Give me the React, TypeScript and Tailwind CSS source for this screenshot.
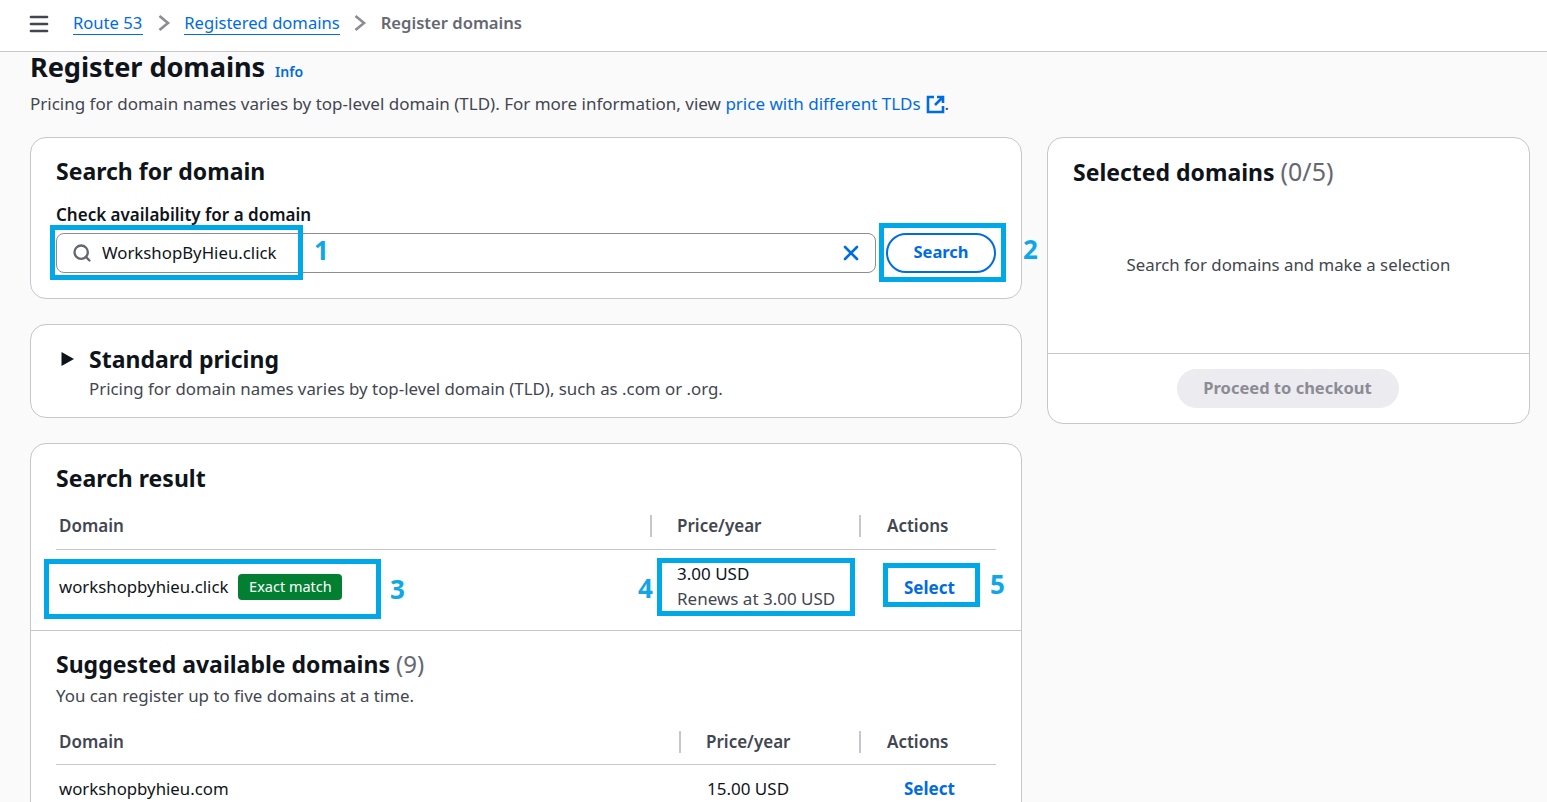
import { Menu, Search, X } from 'lucide-react';

const font = "font-['Noto_Sans',sans-serif]";

const Callout = ({ className, num, numClass }: { className: string; num: string; numClass: string }) => (
  <>
    <div className={`absolute border-[5px] border-[#00a8e8] ${className}`} />
    <span className={`absolute text-[26px] leading-[30px] font-bold text-[#0fa7e6] ${numClass}`}>{num}</span>
  </>
);

const HeaderCell = ({ className, children }: { className: string; children: string }) => (
  <div className={`flex h-[22px] items-center text-[17px] font-semibold text-[#424650] ${className}`}>{children}</div>
);

const Crumb = () => (
  <svg className="mx-[10.5px] h-[16px] w-[20px]" viewBox="0 0 20 16" fill="none">
    <path d="M5.5 1 L14 8 L5.5 15" stroke="#8c8c94" strokeWidth="2.6" />
  </svg>
);

const App = () => {
  return (
    <div className={`relative h-[802px] w-[1547px] overflow-hidden bg-[#fafafa] ${font} text-[#0f141a]`}>
      <header className="flex h-[52px] items-center border-b border-[#c6c6cd] bg-white pb-[4px] pl-[27px]">
        <Menu className="h-[24px] w-[24px] text-[#424650]" strokeWidth={2.7} />
        <nav className="ml-[22px] flex items-center text-[16.6px]">
          <a className="border-b border-[#006ce0] pr-[1px] leading-[22px] text-[#006ce0]">Route 53</a>
          <Crumb />
          <a className="border-b border-[#006ce0] leading-[22px] text-[#006ce0]">Registered domains</a>
          <Crumb />
          <span className="font-semibold text-[#656871]">Register domains</span>
        </nav>
      </header>

      <main className="pl-[30px] pr-[17px]">
        <div className="flex h-[30px] items-end">
          <h1 className="text-[27.2px] leading-[30px] font-bold tracking-[-0.1px]">Register domains</h1>
          <a className="mb-[1px] ml-[10px] text-[14px] leading-[18px] font-semibold text-[#006ce0]">Info</a>
        </div>
        <p className="mt-[10px] flex h-[24px] items-center text-[17px] text-[#424650]">
          Pricing for domain names varies by top-level domain (TLD). For more information, view&nbsp;
          <a className="text-[#006ce0]">price with different TLDs</a>
          <svg className="ml-[5px] h-[19px] w-[19px]" viewBox="0 0 19 19" fill="none" stroke="#006ce0" strokeWidth="2.6">
            <path d="M8 2 H2 V17 H17 V11" />
            <path d="M11 2 H17 V8 M17 2 L9 10" />
          </svg>
          .
        </p>

        <div className="mt-[21px] flex items-start gap-[25px]">
          <div className="flex w-[992px] flex-col gap-[25px]">
            <section className="h-[162px] rounded-[16px] border border-[#c6c6cd] bg-white px-[25px] pt-[17px]">
              <h2 className="text-[23px] leading-[32px] font-bold">Search for domain</h2>
              <div className="mt-[17px] text-[17px] leading-[22px] font-semibold">Check availability for a domain</div>
              <div className="mt-[7px] flex items-center">
                <div className="flex h-[40px] w-[820px] items-center rounded-[8px] border border-[#8c8c94] bg-white pl-[15px] pr-[12px]">
                  <Search className="h-[20px] w-[20px] text-[#656871]" strokeWidth={2.8} />
                  <span className="ml-[10px] flex-1 text-[16.8px]">WorkshopByHieu.click</span>
                  <X className="h-[24px] w-[24px] text-[#006ce0]" strokeWidth={2.6} />
                </div>
                <button className="ml-[10px] h-[40px] w-[110px] rounded-[20px] border-2 border-[#006ce0] bg-white pb-[2px] text-[16.5px] font-bold text-[#006ce0]">
                  Search
                </button>
              </div>
            </section>

            <section className="flex h-[94px] rounded-[16px] border border-[#c6c6cd] bg-white pl-[30px] pt-[19px]">
              <svg className="mt-[8px] h-[14px] w-[14px]" viewBox="0 0 14 14">
                <path d="M0.5 0 L13 7 L0.5 14 Z" fill="#0f141a" />
              </svg>
              <div className="ml-[14px]">
                <h2 className="text-[23px] leading-[30px] font-bold">Standard pricing</h2>
                <p className="mt-[1px] text-[16.85px] leading-[28px] text-[#424650]">
                  Pricing for domain names varies by top-level domain (TLD), such as .com or .org.
                </p>
              </div>
            </section>

            <section className="h-[400px] rounded-t-[16px] border border-[#c6c6cd] bg-white">
              <div className="px-[25px] pt-[18px]">
                <h2 className="text-[23px] leading-[32px] font-bold">Search result</h2>
                <div className="mt-[21px] flex h-[25px] items-start pl-[3px]">
                  <HeaderCell className="w-[591px]">Domain</HeaderCell>
                  <HeaderCell className="w-[209px] border-l-2 border-[#c6c6cd] pl-[25px]">Price/year</HeaderCell>
                  <HeaderCell className="border-l-2 border-[#c6c6cd] pl-[26px]">Actions</HeaderCell>
                </div>
                <div className="mt-[9px] h-px w-[940px] bg-[#c6c6cd]" />
                <div className="flex h-[80px] pl-[3px]">
                  <div className="flex w-[618px] items-center pb-[6px]">
                    <span className="text-[16.8px]">workshopbyhieu.click</span>
                    <span className="ml-[10px] flex h-[26px] w-[104px] items-center justify-center rounded-[4px] bg-[#037f32] text-[14.5px] text-white">
                      Exact match
                    </span>
                  </div>
                  <div className="w-[210px] pt-[11px] text-[17px] leading-[25px]">
                    <div>3.00 USD</div>
                    <div className="text-[#424650]">Renews at 3.00 USD</div>
                  </div>
                  <div className="pl-[17px] pt-[26px] text-[17px] leading-[24px] font-bold text-[#006ce0]">Select</div>
                </div>
              </div>
              <div className="h-px bg-[#c6c6cd]" />
              <div className="px-[25px] pt-[17px]">
                <h2 className="text-[23px] leading-[32px] font-bold">
                  Suggested available domains <span className="text-[24px] font-normal text-[#656871]">(9)</span>
                </h2>
                <p className="mt-[3px] text-[16.9px] leading-[26px] text-[#424650]">You can register up to five domains at a time.</p>
                <div className="mt-[22px] flex h-[25px] items-start pl-[3px]">
                  <HeaderCell className="w-[620px]">Domain</HeaderCell>
                  <HeaderCell className="w-[180px] border-l-2 border-[#c6c6cd] pl-[25px]">Price/year</HeaderCell>
                  <HeaderCell className="border-l-2 border-[#c6c6cd] pl-[26px]">Actions</HeaderCell>
                </div>
                <div className="mt-[8px] h-px w-[940px] bg-[#c6c6cd]" />
                <div className="flex pl-[3px] pt-[12px] text-[16.8px] leading-[24px]">
                  <div className="w-[648px]">workshopbyhieu.com</div>
                  <div className="w-[197px] text-[17px]">15.00 USD</div>
                  <div className="text-[17px] font-bold text-[#006ce0]">Select</div>
                </div>
              </div>
            </section>
          </div>

          <aside className="w-[483px] rounded-[16px] border border-[#c6c6cd] bg-white">
            <div className="h-[215px] px-[25px] pt-[17px]">
              <h2 className="text-[23px] leading-[32px] font-bold">
                Selected domains <span className="text-[25px] font-normal text-[#656871]">(0/5)</span>
              </h2>
              <p className="mt-[65px] text-center text-[16.8px] leading-[24px] text-[#424650]">
                Search for domains and make a selection
              </p>
            </div>
            <div className="flex h-[70px] justify-center border-t border-[#c6c6cd] pr-[2px] pt-[15px]">
              <button className="h-[39px] w-[222px] rounded-[20px] bg-[#ebebf0] text-[16.5px] font-bold text-[#8c8c94]">
                Proceed to checkout
              </button>
            </div>
          </aside>
        </div>
      </main>

      <Callout className="left-[50px] top-[225px] h-[55px] w-[253px]" num="1" numClass="left-[314px] top-[235px]" />
      <Callout className="left-[879px] top-[223px] h-[59px] w-[127px]" num="2" numClass="left-[1023px] top-[234px]" />
      <Callout className="left-[44px] top-[559px] h-[60px] w-[337px]" num="3" numClass="left-[390px] top-[574px]" />
      <Callout className="left-[657px] top-[558px] h-[58px] w-[198px]" num="4" numClass="left-[638px] top-[573px]" />
      <Callout className="left-[883px] top-[563px] h-[44px] w-[97px]" num="5" numClass="left-[990px] top-[569px]" />
    </div>
  );
};

export default App;
